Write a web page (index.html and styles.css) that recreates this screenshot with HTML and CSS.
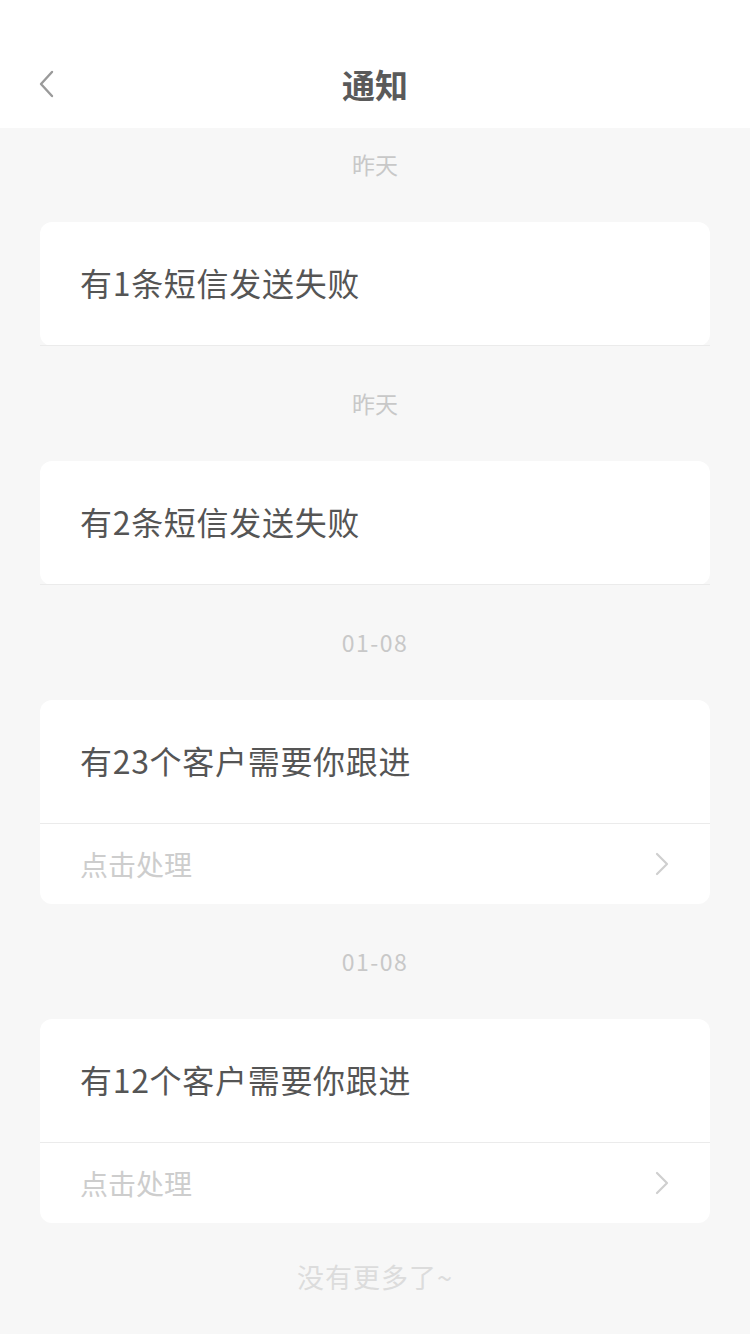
FILE: index.html
```html
<!DOCTYPE html>
<html lang="zh-CN">
<head>
<meta charset="UTF-8">
<meta name="viewport" content="width=device-width, initial-scale=1.0">
<title>通知</title>
<link rel="stylesheet" href="styles.css">
</head>
<body>

<div class="header">
    <div class="navbar">
        <span class="backBtn">
            <svg width="16" height="28" viewBox="0 0 16 28">
                <polyline points="13,2 2,14 13,26" fill="none" stroke="#9a9a9a" stroke-width="2.4" stroke-linecap="round" stroke-linejoin="round"/>
            </svg>
        </span>
        <div class="title">通知</div>
    </div>
</div>

<div class="list">
    <div class="group first">
        <div class="date">昨天</div>
        <div class="card">
            <div class="cardTitle">有1条短信发送失败</div>
        </div>
    </div>
    <div class="group">
        <div class="date">昨天</div>
        <div class="card">
            <div class="cardTitle">有2条短信发送失败</div>
        </div>
    </div>
    <div class="group">
        <div class="date num">01-08</div>
        <div class="card">
            <div class="cardTitle">有23个客户需要你跟进</div>
            <div class="action">
                <span>点击处理</span>
                <svg width="15" height="24" viewBox="0 0 15 24">
                    <polyline points="2,2 12,12 2,22" fill="none" stroke="#cfcfcf" stroke-width="2.2" stroke-linecap="round" stroke-linejoin="round"/>
                </svg>
            </div>
        </div>
    </div>
    <div class="group">
        <div class="date num">01-08</div>
        <div class="card">
            <div class="cardTitle">有12个客户需要你跟进</div>
            <div class="action">
                <span>点击处理</span>
                <svg width="15" height="24" viewBox="0 0 15 24">
                    <polyline points="2,2 12,12 2,22" fill="none" stroke="#cfcfcf" stroke-width="2.2" stroke-linecap="round" stroke-linejoin="round"/>
                </svg>
            </div>
        </div>
    </div>
    <div class="noMore">没有更多了~</div>
</div>

</body>
</html>
```

FILE: styles.css
```css
body {
    font-family: "Noto Sans CJK SC", "Noto Sans", sans-serif;
    background-color: #f7f7f7;
    margin: 0;
    padding: 0;
}
.header {
    background-color: #fff;
    padding-top: 40px;
}
.navbar {
    height: 88px;
    display: flex;
    align-items: center;
    justify-content: center;
    position: relative;
}
.backBtn {
    position: absolute;
    left: 39px;
    top: 30px;
    display: flex;
}
.title {
    font-size: 33px;
    font-weight: bold;
    color: #5a5a5a;
}
.list {
    padding: 0 40px;
}
.group {
    padding-top: 44px;
}
.group.first {
    padding-top: 23px;
}
.date {
    height: 30px;
    line-height: 26px;
    text-align: center;
    font-size: 23px;
    color: #c8c8c8;
    margin-bottom: 41px;
}
.date.num {
    letter-spacing: 1.5px;
}
.card {
    background-color: #fff;
    border-radius: 12px;
}
.cardTitle {
    height: 120px;
    padding-bottom: 3px;
    display: flex;
    align-items: center;
    padding-left: 40px;
    font-size: 32px;
    letter-spacing: 0.7px;
    color: #555;
    border-bottom: 1px solid #ebebeb;
}
.action {
    height: 80px;
    display: flex;
    align-items: center;
    justify-content: space-between;
    padding: 0 40px;
    font-size: 28px;
    color: #cdcdcd;
}
.noMore {
    text-align: center;
    font-size: 27px;
    letter-spacing: 1px;
    color: #dcdcdc;
    padding: 34px 0 40px;
}
```
